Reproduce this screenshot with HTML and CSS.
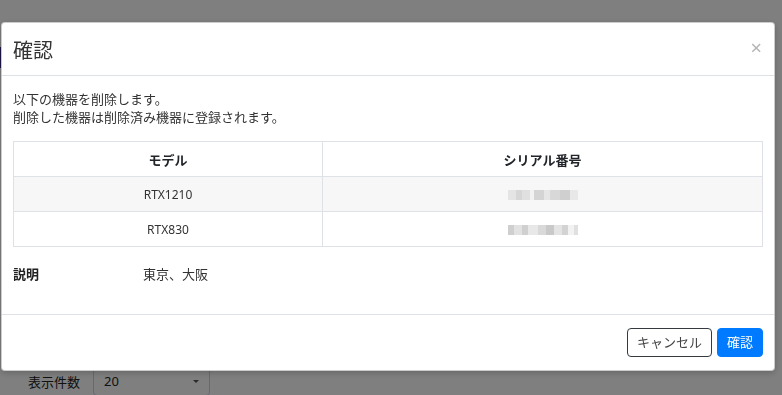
FILE: index.html
```html
<!DOCTYPE html>
<html lang="ja">
<head>
  <meta charset="UTF-8" />
  <meta name="viewport" content="width=device-width, initial-scale=1.0"/>
  <title>確認</title>
  <link rel="stylesheet" href="styles.css">
</head>
<body>
  <!-- Page behind the dialog -->
  <div class="page">
    <div class="nav-mark"></div>
    <div class="page-size">
      <span class="page-size-label">表示件数</span>
      <div class="select">
        <span>20</span>
        <span class="caret"></span>
      </div>
    </div>
  </div>

  <!-- Backdrop + dialog -->
  <div class="backdrop">
    <div class="modal">
      <div class="modal-header">
        <h5 class="modal-title">確認</h5>
        <span class="close">&times;</span>
      </div>

      <div class="modal-body">
        <p class="message">
          以下の機器を削除します。<br>
          削除した機器は削除済み機器に登録されます。
        </p>

        <table class="device-table">
          <thead>
            <tr>
              <th class="col-model">モデル</th>
              <th>シリアル番号</th>
            </tr>
          </thead>
          <tbody>
            <tr class="striped">
              <td>RTX1210</td>
              <td><span class="mosaic m1"></span></td>
            </tr>
            <tr>
              <td>RTX830</td>
              <td><span class="mosaic m2"></span></td>
            </tr>
          </tbody>
        </table>

        <div class="desc-row">
          <span class="desc-label">説明</span>
          <span class="desc-value">東京、大阪</span>
        </div>
      </div>

      <div class="modal-footer">
        <button class="btn btn-cancel">キャンセル</button>
        <button class="btn btn-primary">確認</button>
      </div>
    </div>
  </div>
</body>
</html>
```

FILE: styles.css
```css
/* Basic Reset */
* {
  margin: 0;
  padding: 0;
  box-sizing: border-box;
}

body {
  font-family: "Noto Sans", "Noto Sans CJK JP", sans-serif;
  font-size: 13px;
  color: #212529;
  background-color: #fff;
  width: 782px;
  height: 395px;
  overflow: hidden;
}

/* Page underneath the modal */
.page {
  height: 395px;
  padding-top: 47px;
}

.nav-mark {
  width: 2px;
  height: 21px;
  background-color: #3b2a8c;
}

.page-size {
  display: flex;
  align-items: center;
  margin-top: 298px;
  padding-left: 28px;
  gap: 13px;
}

.page-size-label {
  font-size: 13px;
  color: #222;
}

.select {
  width: 117px;
  height: 30px;
  border: 1px solid #ced4da;
  border-radius: 4px;
  display: flex;
  align-items: center;
  justify-content: space-between;
  padding: 0 10px;
  font-size: 13px;
}

.caret {
  width: 0;
  height: 0;
  border-left: 3px solid transparent;
  border-right: 3px solid transparent;
  border-top: 3px solid #555;
}

/* Dark backdrop over the page */
.backdrop {
  position: fixed;
  inset: 0;
  background-color: rgba(0, 0, 0, 0.5);
  padding: 22px 7px 0 1px;
}

.modal {
  background-color: #fff;
  border: 1px solid rgba(0, 0, 0, 0.2);
  border-radius: 4px;
  box-shadow: 0 2px 6px rgba(0, 0, 0, 0.2);
  overflow: hidden;
}

.modal-header {
  display: flex;
  align-items: center;
  justify-content: space-between;
  height: 53px;
  padding: 0 12px 0 11px;
  border-bottom: 1px solid #dee2e6;
}

.modal-title {
  font-size: 20px;
  font-weight: 400;
  color: #333;
}

.close {
  font-size: 20px;
  color: #b5b5b5;
  line-height: 1;
  margin-top: -2px;
}

.modal-body {
  padding: 14px 11px 31px 11px;
}

.message {
  line-height: 18px;
  color: #333;
}

/* Device table */
.device-table {
  width: 750px;
  margin-top: 15px;
  border-collapse: collapse;
  font-size: 12px;
  color: #333;
}

.device-table th,
.device-table td {
  border: 1px solid #dee2e6;
  height: 35px;
  text-align: center;
  vertical-align: middle;
}

.device-table th {
  font-weight: 700;
  color: #212529;
  font-size: 13px;
}

.col-model {
  width: 309px;
}

.striped td {
  background-color: #f7f7f7;
}

/* Blurred serial numbers */
.mosaic {
  display: inline-block;
  width: 70px;
  height: 10px;
  vertical-align: middle;
}

.m1 {
  background:
    linear-gradient(90deg, #e4e4e4 0 8px, #d6d6d6 8px 14px, #e0e0e0 14px 22px, #f2f2f2 22px 26px,
      #d4d4d4 26px 36px, #e6e6e6 36px 42px, #d8d8d8 42px 52px, #cfcfcf 52px 62px, #e8e8e8 62px 70px);
}

.m2 {
  background:
    linear-gradient(90deg, #cfcfcf 0 6px, #e2e2e2 6px 14px, #d0d0d0 14px 20px, #e8e8e8 20px 30px,
      #d9d9d9 30px 38px, #c9c9c9 38px 46px, #e4e4e4 46px 54px, #d3d3d3 54px 60px, #f2f2f2 60px 66px, #e0e0e0 66px 72px);
}

.desc-row {
  display: flex;
  margin-top: 18px;
  line-height: 18px;
}

.desc-label {
  width: 130px;
  font-weight: 700;
  font-size: 13px;
  color: #222;
}

.desc-value {
  color: #333;
}

/* Footer buttons */
.modal-footer {
  display: flex;
  justify-content: flex-end;
  gap: 5px;
  padding: 13px 11px;
  border-top: 1px solid #dee2e6;
}

.btn {
  font-family: inherit;
  font-size: 13px;
  line-height: 17px;
  padding: 5px 9px;
  border-radius: 4px;
  cursor: pointer;
}

.btn-cancel {
  background-color: #fff;
  border: 1px solid #343a40;
  color: #444;
}

.btn-primary {
  background-color: #007bff;
  border: 1px solid #007bff;
  color: #fff;
}
```
